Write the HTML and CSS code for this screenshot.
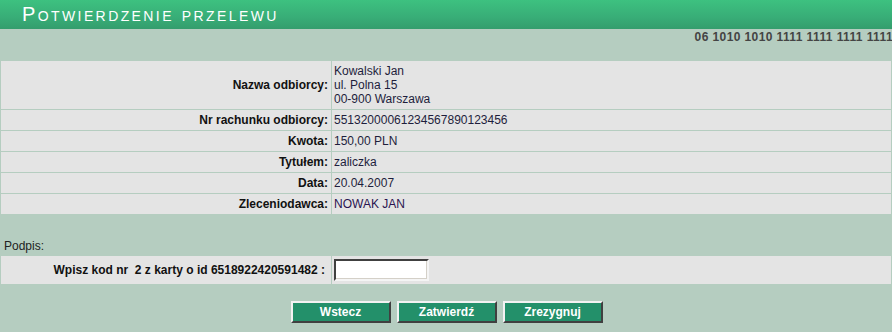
FILE: index.html
```html
<!DOCTYPE html>
<html lang="pl">
<head>
<meta charset="utf-8">
<title>Potwierdzenie przelewu</title>
<link rel="stylesheet" href="styles.css">
</head>
<body>
<div class="header"><h1 class="title">Potwierdzenie przelewu</h1></div>
<div class="account">06 1010 1010 1111 1111 1111 1111</div>
<table class="details">
  <tr><th>Nazwa odbiorcy:</th><td>Kowalski Jan<br>ul. Polna 15<br>00-900 Warszawa</td></tr>
  <tr><th>Nr rachunku odbiorcy:</th><td>55132000061234567890123456</td></tr>
  <tr><th>Kwota:</th><td>150,00 PLN</td></tr>
  <tr><th>Tytułem:</th><td>zaliczka</td></tr>
  <tr><th>Data:</th><td>20.04.2007</td></tr>
  <tr><th>Zleceniodawca:</th><td class="payer">NOWAK JAN</td></tr>
</table>
<div class="sign-label">Podpis:</div>
<table class="details sign">
  <tr><th>Wpisz kod nr &nbsp;2 z karty o id 6518922420591482 :</th><td><input type="text" class="code"></td></tr>
</table>
<div class="buttons">
  <button class="btn">Wstecz</button>
  <button class="btn">Zatwierdź</button>
  <button class="btn">Zrezygnuj</button>
</div>
</body>
</html>
```
FILE: styles.css
```css
html, body {
  margin: 0;
  padding: 0;
}
body {
  background: #b5cdc0;
  font-family: "Liberation Sans", Arial, sans-serif;
  font-size: 12px;
  color: #1a1a1a;
  overflow: hidden;
}
.header {
  height: 29px;
  background: linear-gradient(to bottom, #3dc180 0%, #38ad77 60%, #349d6d 100%);
  box-sizing: border-box;
  padding-left: 22px;
}
.title {
  margin: 0;
  font-family: "Liberation Sans", Arial, sans-serif;
  font-weight: normal;
  font-size: 20px;
  line-height: 29px;
  font-variant: small-caps;
  color: #ffffff;
  letter-spacing: 2.4px;
  white-space: nowrap;
}
.account {
  text-align: right;
  font-weight: bold;
  color: #444444;
  line-height: 16px;
  height: 16px;
  white-space: nowrap;
  letter-spacing: 0.4px;
  margin-right: -1px;
  margin-bottom: 15px;
}
.details {
  width: 100%;
  border-collapse: separate;
  border-spacing: 1px;
}
.details th {
  width: 325px;
  text-align: right;
  font-weight: bold;
  background: #e4e4e4;
  padding: 3px 3px 3px 2px;
  line-height: 14px;
  vertical-align: middle;
  color: #111111;
}
.details td {
  background: #e4e4e4;
  padding: 3px 2px;
  line-height: 14px;
  color: #1e1e3c;
  vertical-align: middle;
}
.details td.payer {
  color: #2a1450;
}
.sign-label {
  margin-top: 22px;
  padding-left: 4px;
  line-height: 18px;
  color: #222222;
}
.details.sign th {
  width: 322px;
  padding-right: 6px;
}
.details.sign td {
  padding: 3px 2px;
}
.code {
  display: block;
  width: 95px;
  height: 22px;
  box-sizing: border-box;
  margin: 0;
  background: #ffffff;
  border-style: solid;
  border-width: 2px;
  border-color: #404040 #f4f4f4 #f4f4f4 #404040;
  box-shadow: inset -1px -1px 0 #d4d0c8;
}
.buttons {
  display: flex;
  justify-content: center;
  gap: 6px;
  margin-top: 16px;
  padding-left: 1px;
}
.btn {
  width: 100px;
  height: 22px;
  box-sizing: border-box;
  background: #23906a;
  color: #ffffff;
  font-family: "Liberation Sans", Arial, sans-serif;
  font-size: 12px;
  font-weight: bold;
  border-style: solid;
  border-width: 2px;
  border-color: #f2f2f2 #404040 #404040 #f2f2f2;
  padding: 0;
  margin: 0;
}
```
